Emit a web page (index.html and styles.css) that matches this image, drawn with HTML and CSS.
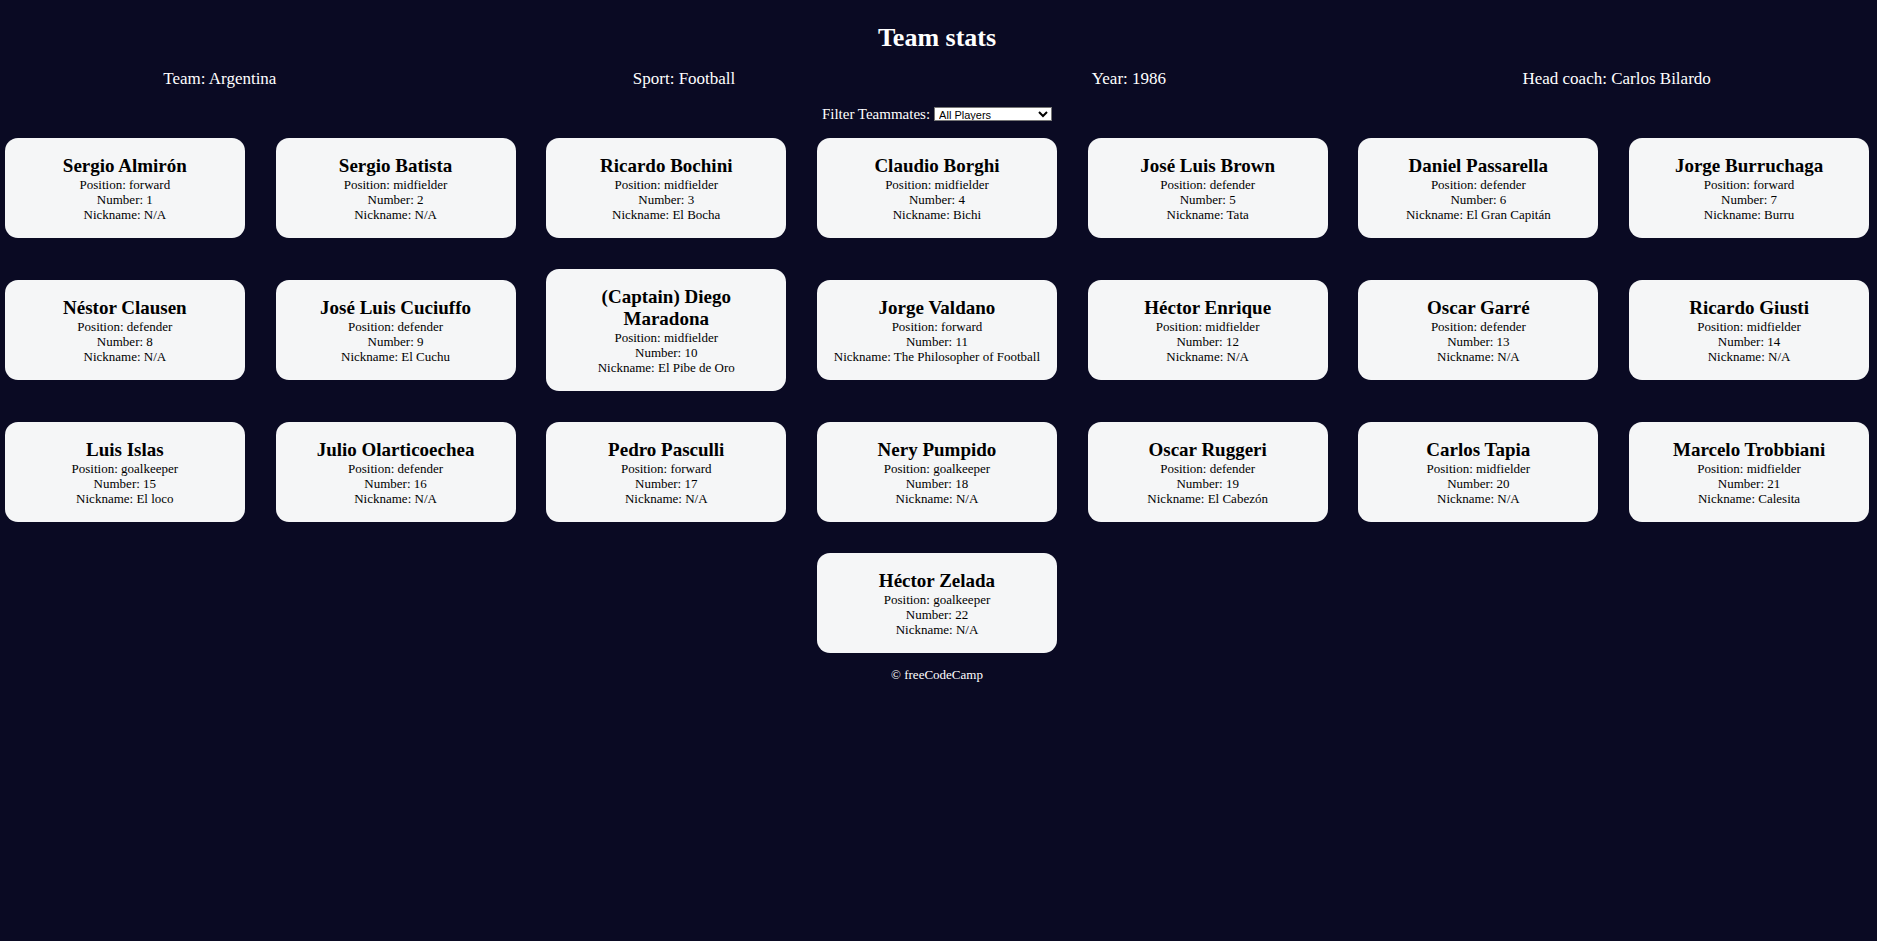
FILE: index.html
```html
<!DOCTYPE html>
<html lang="en">
<head>
<meta charset="utf-8">
<meta name="viewport" content="width=device-width, initial-scale=1">
<title>Team stats</title>
<link rel="stylesheet" href="styles.css">
</head>
<body>
<h1 class="title">Team stats</h1>
<main>
<div class="team-stats">
<p>Team: Argentina</p>
<p>Sport: Football</p>
<p>Year: 1986</p>
<p>Head coach: Carlos Bilardo</p>
</div>
<div class="filter">
<label for="players">Filter Teammates:</label>
<select id="players" name="players">
<option>All Players</option>
<option>Nicknames</option>
<option>Position Forward</option>
<option>Position Midfielder</option>
<option>Position Defender</option>
<option>Position Goalkeeper</option>
</select>
</div>
<div class="cards">
<article class="card"><h2>Sergio Almirón</h2><p>Position: forward</p><p>Number: 1</p><p>Nickname: N/A</p></article>
<article class="card"><h2>Sergio Batista</h2><p>Position: midfielder</p><p>Number: 2</p><p>Nickname: N/A</p></article>
<article class="card"><h2>Ricardo Bochini</h2><p>Position: midfielder</p><p>Number: 3</p><p>Nickname: El Bocha</p></article>
<article class="card"><h2>Claudio Borghi</h2><p>Position: midfielder</p><p>Number: 4</p><p>Nickname: Bichi</p></article>
<article class="card"><h2>José Luis Brown</h2><p>Position: defender</p><p>Number: 5</p><p>Nickname: Tata</p></article>
<article class="card"><h2>Daniel Passarella</h2><p>Position: defender</p><p>Number: 6</p><p>Nickname: El Gran Capitán</p></article>
<article class="card"><h2>Jorge Burruchaga</h2><p>Position: forward</p><p>Number: 7</p><p>Nickname: Burru</p></article>
<article class="card"><h2>Néstor Clausen</h2><p>Position: defender</p><p>Number: 8</p><p>Nickname: N/A</p></article>
<article class="card"><h2>José Luis Cuciuffo</h2><p>Position: defender</p><p>Number: 9</p><p>Nickname: El Cuchu</p></article>
<article class="card"><h2>(Captain) Diego Maradona</h2><p>Position: midfielder</p><p>Number: 10</p><p>Nickname: El Pibe de Oro</p></article>
<article class="card"><h2>Jorge Valdano</h2><p>Position: forward</p><p>Number: 11</p><p>Nickname: The Philosopher of Football</p></article>
<article class="card"><h2>Héctor Enrique</h2><p>Position: midfielder</p><p>Number: 12</p><p>Nickname: N/A</p></article>
<article class="card"><h2>Oscar Garré</h2><p>Position: defender</p><p>Number: 13</p><p>Nickname: N/A</p></article>
<article class="card"><h2>Ricardo Giusti</h2><p>Position: midfielder</p><p>Number: 14</p><p>Nickname: N/A</p></article>
<article class="card"><h2>Luis Islas</h2><p>Position: goalkeeper</p><p>Number: 15</p><p>Nickname: El loco</p></article>
<article class="card"><h2>Julio Olarticoechea</h2><p>Position: defender</p><p>Number: 16</p><p>Nickname: N/A</p></article>
<article class="card"><h2>Pedro Pasculli</h2><p>Position: forward</p><p>Number: 17</p><p>Nickname: N/A</p></article>
<article class="card"><h2>Nery Pumpido</h2><p>Position: goalkeeper</p><p>Number: 18</p><p>Nickname: N/A</p></article>
<article class="card"><h2>Oscar Ruggeri</h2><p>Position: defender</p><p>Number: 19</p><p>Nickname: El Cabezón</p></article>
<article class="card"><h2>Carlos Tapia</h2><p>Position: midfielder</p><p>Number: 20</p><p>Nickname: N/A</p></article>
<article class="card"><h2>Marcelo Trobbiani</h2><p>Position: midfielder</p><p>Number: 21</p><p>Nickname: Calesita</p></article>
<article class="card"><h2>Héctor Zelada</h2><p>Position: goalkeeper</p><p>Number: 22</p><p>Nickname: N/A</p></article>
</div>
</main>
<footer>&copy; freeCodeCamp</footer>
</body>
</html>
```
FILE: styles.css
```css
* {
  box-sizing: border-box;
  margin: 0;
  padding: 0;
}

body {
  min-height: 100vh;
  padding: 23px 3px 0 0;
  background: #0a0a23;
  color: #fff;
  font-family: "Liberation Serif", "Times New Roman", serif;
  text-align: center;
}

.title {
  font-size: 26px;
  line-height: 30px;
}

.team-stats {
  display: flex;
  flex-wrap: wrap;
  justify-content: space-around;
  gap: 30px;
  padding: 16px 0;
  font-size: 17px;
  line-height: 20px;
}

.filter {
  display: flex;
  align-items: center;
  justify-content: center;
  gap: 4px;
  font-size: 15px;
  line-height: 18px;
}

.filter select {
  width: 118px;
  height: 14px;
  border: 1px solid #767676;
  background: #fff;
  color: #000;
  font-family: "Liberation Sans", Arial, sans-serif;
  font-size: 11px;
  line-height: 12px;
}

.cards {
  display: flex;
  flex-wrap: wrap;
  align-items: center;
  justify-content: space-around;
  gap: 31px 21px;
  padding: 15px 0 14px;
}

.card {
  width: 240px;
  padding: 17px 16px 16px;
  border-radius: 13px;
  background: #f5f6f7;
  color: #000;
  font-size: 13px;
  line-height: 15px;
}

.card h2 {
  font-size: 19px;
  line-height: 22px;
}

footer {
  font-size: 13px;
  line-height: 15px;
}
```
